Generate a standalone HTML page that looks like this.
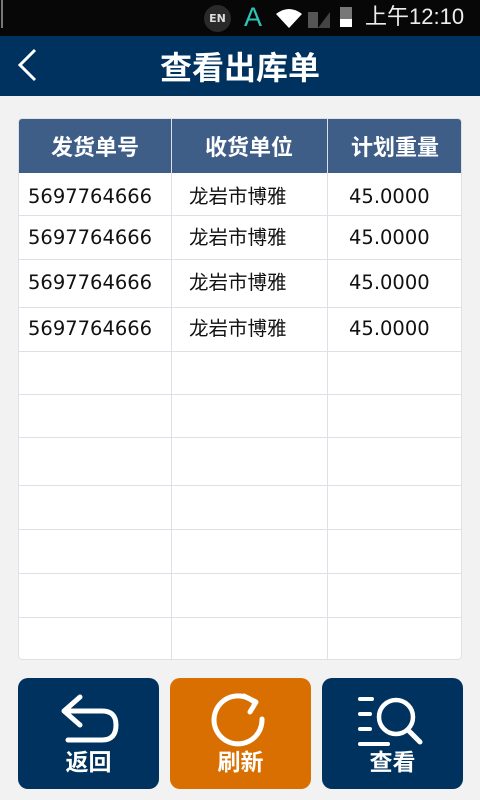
<!DOCTYPE html><html><head><meta charset="utf-8"><style>
body{margin:0;width:480px;height:800px;background:#f2f2f2;position:relative;overflow:hidden;font-family:"DejaVu Sans","Noto Sans CJK SC",sans-serif}
.a{position:absolute}
.sb{left:0;top:0;width:480px;height:36px;background:#070707}
.hd{left:0;top:36px;width:480px;height:60px;background:#00325f}
.tt{left:0;width:480px;top:46px;text-align:center;color:#fff;font-size:32px;font-weight:bold;font-family:"Noto Sans CJK SC",sans-serif;line-height:40px}
.tbl{left:18px;top:118px;width:444px;height:542px;background:#fff;border:1px solid #dde1e5;border-radius:4px;box-sizing:border-box;overflow:hidden}
.th{left:0;top:0;width:444px;height:54px;background:#3e5e88}
.h{top:0;height:54px;line-height:54px;color:#fff;font-size:22px;font-weight:bold;text-align:center;font-family:"Noto Sans CJK SC",sans-serif}
.vl{top:0;width:1px;height:542px;background:#dde1e5}
.hl{left:0;width:444px;height:1px;background:#dde1e5}
.c{font-size:19.5px;color:#111;line-height:24px}
.btn{top:678px;width:141px;height:111px;border-radius:10px;background:#00325f}
.bl{width:141px;left:0;top:66px;text-align:center;color:#fff;font-size:23px;font-weight:bold;font-family:"Noto Sans CJK SC",sans-serif;line-height:32px}
</style></head><body>
<div class="a sb"></div>
<div class="a" style="left:1px;top:0;width:2px;height:28px;background:#777"></div>
<div class="a" style="left:204px;top:5px;width:27px;height:27px;border-radius:50%;background:#2a2a2a;color:#ddd;font-size:11px;font-weight:bold;line-height:27px;text-align:center">EN</div>
<div class="a" style="left:244px;top:2px;color:#2ec4b6;font-size:27px;line-height:30px;font-family:'Liberation Sans',sans-serif">A</div>
<svg class="a" style="left:274px;top:6px" width="60" height="24"><path d="M2 8 Q15 -2 28 8 L15 22Z" fill="#fff"/><rect x="34" y="6" width="10" height="16" fill="#555"/><path d="M44 22 L56 6 V22Z" fill="#444"/></svg>
<div class="a" style="left:340px;top:7px;width:12px;height:20px;background:#777"><div style="position:absolute;left:0;bottom:0;width:12px;height:8px;background:#fff"></div></div>
<div class="a" style="left:365px;top:2px;color:#eee;font-size:22px;line-height:30px;font-family:'Liberation Sans','Noto Sans CJK SC',sans-serif">上午12:10</div>
<div class="a hd"></div>
<svg class="a" style="left:16px;top:48px" width="24" height="34"><path d="M19 2 L4 17 L19 32" stroke="#fff" stroke-width="3" fill="none"/></svg>
<div class="a tt">查看出库单</div>
<div class="a tbl">
<div class="a th"></div>
<div class="a h" style="left:0;width:152px">发货单号</div>
<div class="a h" style="left:152px;width:156px">收货单位</div>
<div class="a h" style="left:308px;width:136px">计划重量</div>
<div class="a vl" style="left:152px"></div><div class="a vl" style="left:308px"></div>
<div class="a hl" style="top:96px"></div><div class="a hl" style="top:140px"></div><div class="a hl" style="top:188px"></div><div class="a hl" style="top:232px"></div><div class="a hl" style="top:275px"></div><div class="a hl" style="top:318px"></div><div class="a hl" style="top:366px"></div><div class="a hl" style="top:410px"></div><div class="a hl" style="top:454px"></div><div class="a hl" style="top:498px"></div>
<div class="a c" style="left:9px;top:66px">5697764666</div><div class="a c" style="left:170px;top:66px">龙岩市博雅</div><div class="a c" style="left:330px;top:66px">45.0000</div>
<div class="a c" style="left:9px;top:107px">5697764666</div><div class="a c" style="left:170px;top:107px">龙岩市博雅</div><div class="a c" style="left:330px;top:107px">45.0000</div>
<div class="a c" style="left:9px;top:152px">5697764666</div><div class="a c" style="left:170px;top:152px">龙岩市博雅</div><div class="a c" style="left:330px;top:152px">45.0000</div>
<div class="a c" style="left:9px;top:198px">5697764666</div><div class="a c" style="left:170px;top:198px">龙岩市博雅</div><div class="a c" style="left:330px;top:198px">45.0000</div>
</div>
<div class="a btn" style="left:18px"><svg class="a" style="left:40px;top:15px" width="62" height="55"><path d="M22 4 L6 18 L22 32 M6 18 H44 Q58 18 58 32 Q58 47 44 47 H10" stroke="#fff" stroke-width="5" fill="none" stroke-linecap="round" stroke-linejoin="round"/></svg><div class="a bl">返回</div></div>
<div class="a btn" style="left:170px;background:#d86f00"><svg class="a" style="left:40px;top:15px" width="62" height="55"><path d="M52 26 A24 24 0 1 1 44 9" stroke="#fff" stroke-width="5" fill="none" stroke-linecap="round"/><path d="M34 3 L46 9 L40 19" stroke="#fff" stroke-width="5" fill="none" stroke-linecap="round" stroke-linejoin="round"/></svg><div class="a bl">刷新</div></div>
<div class="a btn" style="left:322px"><svg class="a" style="left:36px;top:15px" width="70" height="55"><path d="M2 6 H14 M2 21 H12 M2 36 H12 M2 51 H30" stroke="#fff" stroke-width="4" fill="none" stroke-linecap="round"/><circle cx="38" cy="24" r="17" stroke="#fff" stroke-width="4.5" fill="none"/><path d="M50 37 L62 49" stroke="#fff" stroke-width="5" stroke-linecap="round"/></svg><div class="a bl">查看</div></div>
</body></html>
